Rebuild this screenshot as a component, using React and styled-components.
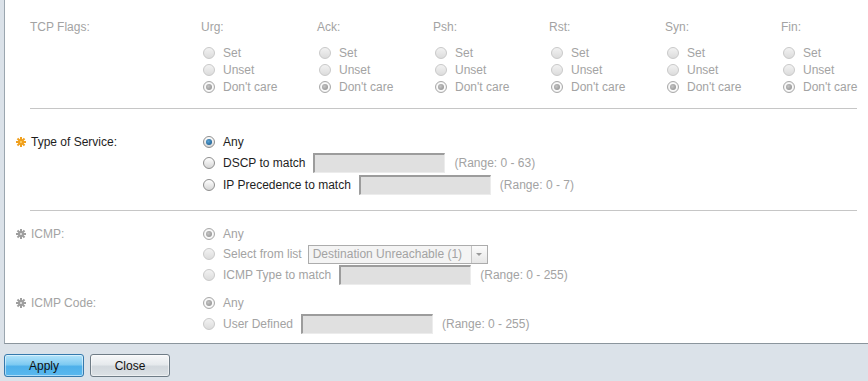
import React from 'react';
import styled, { createGlobalStyle, css } from 'styled-components';

const GlobalStyle = createGlobalStyle`
  html, body {
    margin: 0;
    padding: 0;
    background: #dbe2e9;
    font-family: "Liberation Sans", Arial, sans-serif;
    font-size: 12px;
  }
`;

const Page = styled.div`
  width: 868px;
  height: 381px;
  overflow: hidden;
`;

const Panel = styled.div`
  margin-left: 4px;
  height: 335px;
  padding: 0 11px 8px 25px;
  background: #fff;
  border-left: 1px solid #9ba6af;
  border-bottom: 1px solid #8b959d;
`;

const Section = styled.div`
  display: grid;
  grid-template-columns: 172px 1fr;
  row-gap: ${p => p.$gap || 0}px;
  padding: ${p => p.$top}px 0 ${p => p.$bottom}px;
  border-bottom: ${p => (p.$last ? 'none' : '1px solid #c6c6c6')};
`;

const Label = styled.div`
  display: flex;
  align-items: center;
  height: ${p => p.$h || 20}px;
  color: ${p => (p.$disabled ? '#a3a3a3' : '#1e1e1e')};
  ${p => p.$icon && css`margin-left: -14px;`}
  gap: 5px;
`;

const FlagGrid = styled.div`
  display: grid;
  grid-template-columns: repeat(6, 116px);
`;

const FlagCol = styled.div`
  display: flex;
  flex-direction: column;
`;

const FlagHead = styled.div`
  height: 16px;
  line-height: 16px;
  margin-left: -1px;
  margin-bottom: 9px;
  color: #a3a3a3;
`;

const Options = styled.div`
  display: flex;
  flex-direction: column;
`;

const Option = styled.div`
  display: flex;
  align-items: center;
  height: ${p => p.$h || 20}px;
  color: ${p => (p.$disabled ? '#a3a3a3' : '#1e1e1e')};
  white-space: nowrap;
`;

const Radio = styled.span`
  box-sizing: border-box;
  position: relative;
  width: 12px;
  height: 12px;
  margin: 0 8px 0 1px;
  border-radius: 50%;
  flex: none;
  border: 1px solid ${p => (p.$disabled ? '#c9c9c9' : '#8e8e8e')};
  background: ${p =>
    p.$disabled
      ? 'linear-gradient(#f2f2f2, #dcdcdc)'
      : 'linear-gradient(#ffffff, #d6d6d6)'};
  ${p =>
    p.$checked &&
    css`
      &::after {
        content: '';
        position: absolute;
        left: 2px;
        top: 2px;
        width: 6px;
        height: 6px;
        border-radius: 50%;
        background: ${p.$disabled
          ? 'radial-gradient(circle at 40% 40%, #c4c4c4, #8a8a8a)'
          : 'radial-gradient(circle at 40% 40%, #5aa3d6, #0f4f80)'};
      }
    `}
  ${p =>
    p.$checked &&
    p.$disabled &&
    css`
      background: radial-gradient(circle, #fafafa 55%, #d8d8d8 100%);
      border-color: #a9a9a9;
    `}
`;

const TextBox = styled.span`
  box-sizing: border-box;
  display: inline-block;
  width: 132px;
  height: 20px;
  margin: 0 9px 0 8px;
  background: #e0e0e0;
  border-top: 2px solid #9c9c9c;
  border-left: 2px solid #9c9c9c;
  border-right: 1px solid #ececec;
  border-bottom: 1px solid #ececec;
`;

const Hint = styled.span`
  color: #a3a3a3;
`;

const SelectBox = styled.span`
  box-sizing: border-box;
  display: inline-flex;
  align-items: center;
  justify-content: space-between;
  width: 180px;
  height: 19px;
  margin-left: 6px;
  padding-left: 4px;
  border: 1px solid #acacac;
  background: #f4f4f4;
  color: #a3a3a3;
`;

const SelectArrow = styled.span`
  box-sizing: border-box;
  display: flex;
  align-items: center;
  justify-content: center;
  width: 16px;
  height: 17px;
  border-left: 1px solid #c4c4c4;
  background: linear-gradient(#fcfcfc, #e6e6e6);
  &::after {
    content: '';
    border-left: 3px solid transparent;
    border-right: 3px solid transparent;
    border-top: 3px solid #9a9a9a;
  }
`;

const Footer = styled.div`
  display: flex;
  gap: 6px;
  padding: 10px 0 0 4px;
`;

const Button = styled.button`
  box-sizing: border-box;
  width: 80px;
  height: 23px;
  padding: 0;
  border-radius: 3px;
  font-family: "Liberation Sans", Arial, sans-serif;
  font-size: 12px;
  color: #111;
  border: 1px solid ${p => (p.$primary ? '#3579ad' : '#6f7c86')};
  background: ${p =>
    p.$primary
      ? 'linear-gradient(#b4e3fa 0%, #7fcbf2 45%, #4eb0ea 55%, #5ab8ee 100%)'
      : 'linear-gradient(#f7f8f9 0%, #e6eaed 45%, #d2d8dd 55%, #dce1e5 100%)'};
  box-shadow: inset 0 0 0 1px rgba(255, 255, 255, 0.5);
`;

const Gear = ({ disabled }) => {
  const c = disabled ? '#9e9e9e' : '#f0a01e';
  const spikes = [0, 45, 90, 135, 180, 225, 270, 315];
  return (
    <svg width="10" height="10" viewBox="0 0 18 18">
      {spikes.map(a => (
        <rect key={a} x="7.2" y="0" width="3.6" height="5.5" fill={c} transform={`rotate(${a} 9 9)`} />
      ))}
      <circle cx="9" cy="9" r="5.2" fill={c} />
      <circle cx="9" cy="9" r="2" fill={disabled ? '#e6e6e6' : '#ffd36a'} />
    </svg>
  );
};

const flags = ['Urg', 'Ack', 'Psh', 'Rst', 'Syn', 'Fin'];

export default function App() {
  return (
    <Page>
      <GlobalStyle />
      <Panel>
        <Section $top={19} $bottom={13}>
          <Label $h={16} $disabled>TCP Flags:</Label>
          <FlagGrid>
            {flags.map(f => (
              <FlagCol key={f}>
                <FlagHead>{f}:</FlagHead>
                <Options>
                  <Option $h={17} $disabled><Radio $disabled />Set</Option>
                  <Option $h={17} $disabled><Radio $disabled />Unset</Option>
                  <Option $h={17} $disabled><Radio $disabled $checked />Don't care</Option>
                </Options>
              </FlagCol>
            ))}
          </FlagGrid>
        </Section>

        <Section $top={23} $bottom={14}>
          <Label $icon><Gear />Type of Service:</Label>
          <Options>
            <Option><Radio $checked />Any</Option>
            <Option $h={22}><Radio />DSCP to match<TextBox /><Hint>(Range: 0 - 63)</Hint></Option>
            <Option $h={22}><Radio />IP Precedence to match<TextBox /><Hint>(Range: 0 - 7)</Hint></Option>
          </Options>
        </Section>

        <Section $top={13} $bottom={0} $gap={7} $last>
          <Label $icon $disabled><Gear disabled />ICMP:</Label>
          <Options>
            <Option $disabled><Radio $disabled $checked />Any</Option>
            <Option $disabled>
              <Radio $disabled />Select from list
              <SelectBox>Destination Unreachable (1)<SelectArrow /></SelectBox>
            </Option>
            <Option $h={22} $disabled><Radio $disabled />ICMP Type to match<TextBox /><Hint>(Range: 0 - 255)</Hint></Option>
          </Options>
          <Label $icon $disabled><Gear disabled />ICMP Code:</Label>
          <Options>
            <Option $disabled><Radio $disabled $checked />Any</Option>
            <Option $h={22} $disabled><Radio $disabled />User Defined<TextBox /><Hint>(Range: 0 - 255)</Hint></Option>
          </Options>
        </Section>
      </Panel>
      <Footer>
        <Button $primary>Apply</Button>
        <Button>Close</Button>
      </Footer>
    </Page>
  );
}
